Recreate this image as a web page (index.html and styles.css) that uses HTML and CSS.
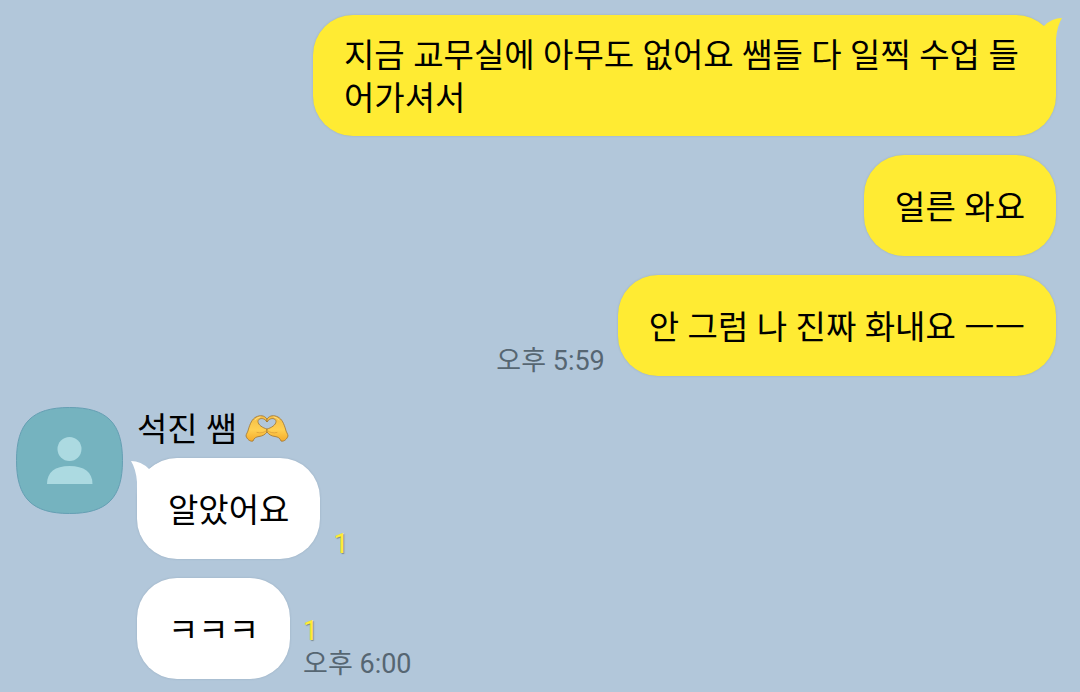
FILE: index.html
```html
<!DOCTYPE html>
<html lang="ko">
<head>
<meta charset="utf-8">
<meta name="viewport" content="width=device-width, initial-scale=1">
<title>채팅</title>
<link rel="stylesheet" href="styles.css">
</head>
<body>
<main class="chat">
  <section class="group group-mine">
    <div class="message">
      <p class="bubble">지금 교무실에 아무도 없어요 쌤들 다 일찍 수업 들어가셔서</p>
      <svg class="tail" viewBox="0 0 24 40" aria-hidden="true"><path d="M0 4Q7 7 12 11Q20 3 30 3Q25 11 24 24V40H0Z"/></svg>
    </div>
    <div class="message">
      <p class="bubble">얼른 와요</p>
    </div>
    <div class="message">
      <div class="meta"><time datetime="17:59">오후 5:59</time></div>
      <p class="bubble">안 그럼 나 진짜 화내요 ㅡㅡ</p>
    </div>
  </section>

  <section class="group-theirs">
    <svg class="avatar" viewBox="0 0 107 107" role="img" aria-label="프로필">
      <path d="M53.500 .5C91 .5 106.500 16 106.500 53.500S91 106.500 53.500 106.500.5 91 .5 53.500 16 .5 53.500 .5Z" fill="#75b3bf" stroke="#659fb3"/>
      <circle cx="53.500" cy="42" r="12" fill="#acdae1"/>
      <path d="M31 77C31 65 39 59 53.500 59S76.500 65 76.500 77Z" fill="#acdae1"/>
    </svg>
    <div class="thread">
      <h2 class="name">석진 쌤
        <svg class="emoji" viewBox="0 0 44 30" role="img" aria-label="손 하트">
          <defs>
            <linearGradient id="skin" x1="0" y1="0" x2="0" y2="1"><stop offset="0" stop-color="#f4bd45"/><stop offset=".55" stop-color="#ffd052"/><stop offset="1" stop-color="#f5ab2b"/></linearGradient>
            <g id="hand">
              <path d="M22 5C19 1 15 1 11 3C7 5 5 10 3.500 15C3 18 1 20 1 22C2 25 5 28 8 27C9 24 11 23 14 22.500C18 22 20 20.500 22 18V15C18 14 13 11 13 7.500C13 4 19 3 22 8Z" fill="url(#skin)" stroke="#a0742f" stroke-width=".8" stroke-linejoin="round"/>
              <path d="M12 18.500C16 19.500 19 18.500 21 17" fill="none" stroke="#d99a33" stroke-width=".7" stroke-linecap="round"/>
              <path d="M10 6Q12 3.500 15 3" fill="none" stroke="#ffe087" stroke-width="1" stroke-linecap="round"/>
            </g>
          </defs>
          <use href="#hand"/><use href="#hand" transform="translate(44 0) scale(-1 1)"/>
        </svg>
      </h2>
      <div class="group">
        <div class="message">
          <svg class="tail" viewBox="0 0 24 40" aria-hidden="true"><path d="M24 4Q17 7 12 11Q4 3 -6 3Q-1 11 0 24V40H24Z"/></svg>
          <p class="bubble">알았어요</p>
          <div class="meta"><span class="unread">1</span></div>
        </div>
        <div class="message">
          <p class="bubble">ㅋㅋㅋ</p>
          <div class="meta"><span class="unread">1</span><time datetime="18:00">오후 6:00</time></div>
        </div>
      </div>
    </div>
  </section>
</main>
</body>
</html>
```
FILE: styles.css
```css
* { box-sizing: border-box; }

body {
  margin: 0;
  min-height: 100vh;
  background: #b2c7da;
  color: #000;
  font-family: Lato, "Noto Sans CJK KR", sans-serif;
  font-size: 33px;
  line-height: 43px;
}

.chat {
  display: flex;
  flex-direction: column;
  gap: 31px;
  padding: 15px 24px 13px 16px;
}

.group {
  display: flex;
  flex-direction: column;
  align-items: flex-start;
  gap: 19px;
}

.group-mine { align-items: flex-end; }

.group-theirs {
  display: flex;
  align-items: flex-start;
  gap: 14px;
}

.message {
  position: relative;
  display: flex;
  align-items: flex-end;
  gap: 13px;
}

.bubble {
  display: flex;
  align-items: center;
  margin: 0;
  min-height: 101px;
  max-width: 743px;
  padding: 18px 31px 17px;
  border-radius: 40px;
  background: #fff;
  box-shadow: 0 0 2px rgba(70, 90, 110, 0.25);
  word-break: break-all;
}

.group-mine .bubble { background: #ffeb33; }

.tail {
  position: absolute;
  top: 0;
  left: 0;
  width: 24px;
  height: 40px;
  overflow: visible;
  fill: #fff;
}

.group-mine .tail {
  right: 0;
  left: auto;
  fill: #ffeb33;
}

.avatar {
  flex: none;
  width: 107px;
  height: 107px;
}

.thread {
  display: flex;
  flex-direction: column;
  gap: 8px;
}

.name {
  display: flex;
  align-items: center;
  gap: 8px;
  margin: 0;
  font-size: inherit;
  font-weight: 400;
}

.emoji {
  width: 44px;
  height: 30px;
}

.meta {
  display: flex;
  flex-direction: column;
  gap: 4px;
  color: #566672;
  font-family: Roboto, "Noto Sans CJK KR", sans-serif;
  font-size: 27px;
  line-height: 29px;
}

.unread {
  color: #ffeb33;
  text-shadow: 1px 1px 1px rgba(70, 80, 60, 0.5);
}
```
